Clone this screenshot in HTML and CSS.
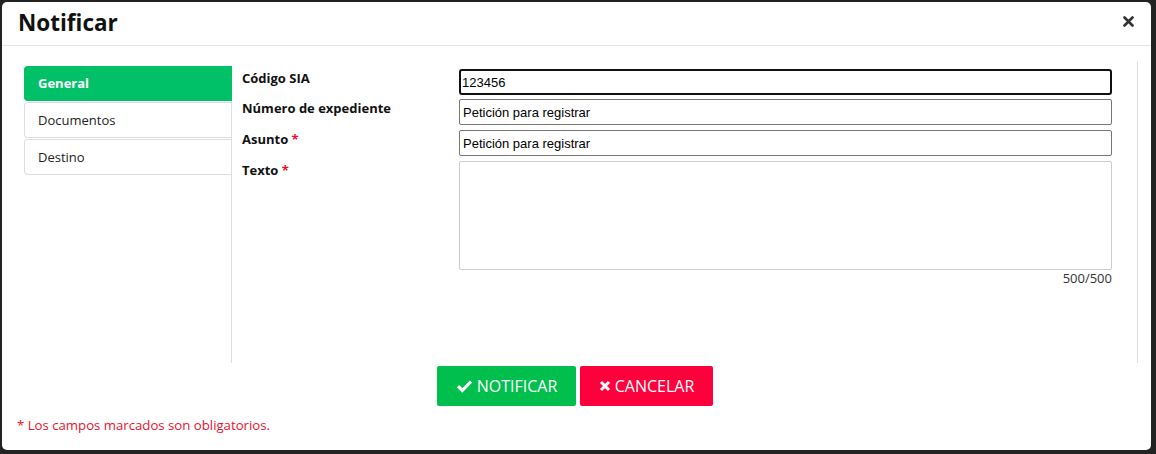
FILE: index.html
```html
<!DOCTYPE html>
<html lang="es">
<head>
    <meta charset="UTF-8">
    <meta name="viewport" content="width=device-width, initial-scale=1.0">
    <title>Notificar</title>
    <link rel="stylesheet" href="styles.css">
</head>
<body>
    <div class="modal">
        <div class="modal-header">
            <h1>Notificar</h1>
            <span class="close">
                <svg width="11" height="11" viewBox="0 0 11 11"><path d="M1.5 1.5L9.5 9.5M9.5 1.5L1.5 9.5" stroke="#333" stroke-width="2.6" stroke-linecap="round"/></svg>
            </span>
        </div>
        <div class="modal-body">
            <ul class="tabs">
                <li class="tab active">General</li>
                <li class="tab">Documentos</li>
                <li class="tab">Destino</li>
            </ul>
            <div class="pane">
                <div class="form-row">
                    <label for="sia">Código SIA</label>
                    <input type="text" id="sia" class="focused" value="123456">
                </div>
                <div class="form-row">
                    <label for="exp">Número de expediente</label>
                    <input type="text" id="exp" value="Petición para registrar">
                </div>
                <div class="form-row">
                    <label for="asunto">Asunto <span class="req">*</span></label>
                    <input type="text" id="asunto" value="Petición para registrar">
                </div>
                <div class="form-row">
                    <label for="texto">Texto <span class="req">*</span></label>
                    <div class="field">
                        <textarea id="texto"></textarea>
                        <div class="counter">500/500</div>
                    </div>
                </div>
            </div>
        </div>
        <div class="actions">
            <button type="button" class="btn btn-ok">
                <svg width="17" height="14" viewBox="0 0 17 14"><path d="M2 7.2L6.3 11.5L15 2.5" fill="none" stroke="#fff" stroke-width="3.2"/></svg>
                NOTIFICAR
            </button>
            <button type="button" class="btn btn-cancel">
                <svg width="12" height="12" viewBox="0 0 12 12"><path d="M2 2L10 10M10 2L2 10" stroke="#fff" stroke-width="3"/></svg>
                CANCELAR
            </button>
        </div>
        <div class="note">* Los campos marcados son obligatorios.</div>
    </div>
</body>
</html>
```

FILE: styles.css
```css
body {
    margin: 0;
    padding: 2px;
    background-color: #222;
    font-family: 'Open Sans', sans-serif;
    color: #222;
}
.modal {
    width: 1149px;
    height: 448px;
    background: #fff;
    border-radius: 5px;
    box-sizing: border-box;
}
.modal-header {
    height: 44px;
    border-bottom: 1px solid #e5e5e5;
    box-sizing: border-box;
    display: flex;
    align-items: center;
    justify-content: space-between;
    padding: 0 17px 0 16px;
}
.modal-header h1 {
    margin: 0;
    font-size: 22.5px;
    font-weight: 700;
    color: #111;
    line-height: 1;
}
.close {
    display: flex;
    margin-top: -4px;
}
.modal-body {
    display: flex;
    height: 317px;
    padding: 16px 13px 0 22px;
    box-sizing: border-box;
}
.tabs {
    list-style: none;
    margin: 4px 0 0 0;
    padding: 0;
    width: 208px;
    border-right: 1px solid #ddd;
    box-sizing: border-box;
}
.tab {
    height: 36px;
    margin-bottom: 1px;
    margin-right: -1px;
    padding-left: 13px;
    border: 1px solid #ddd;
    border-right: none;
    border-radius: 4px 0 0 4px;
    display: flex;
    align-items: center;
    font-size: 13px;
    color: #222;
    box-sizing: border-box;
}
.tab.active {
    height: 35px;
    margin-bottom: 1px;
    padding-bottom: 2px;
    background: #00c168;
    border-color: #00c168;
    color: #fff;
    font-weight: 700;
}
.pane {
    width: 906px;
    border-right: 1px solid #ddd;
    box-sizing: border-box;
    padding: 7px 25px 0 10px;
}
.form-row {
    display: flex;
    align-items: flex-start;
    margin-bottom: 5px;
}
.form-row:first-child {
    margin-bottom: 4px;
}
label {
    width: 217px;
    flex-shrink: 0;
    padding-top: 1px;
    font-size: 13px;
    font-weight: 700;
    line-height: 16px;
    color: #111;
}
.req {
    color: #f0102d;
}
input, textarea {
    width: 653px;
    height: 26px;
    margin: 0;
    padding: 0 3px;
    border: 1px solid #767676;
    border-radius: 2px;
    box-sizing: border-box;
    font-family: 'Liberation Sans', Arial, sans-serif;
    font-size: 13px;
    color: #000;
}
input.focused {
    border: 2px solid #111;
    border-radius: 3px;
    padding: 0 1px;
}
.field {
    width: 653px;
}
textarea {
    display: block;
    height: 109px;
    border-color: #ccc;
    resize: none;
}
.counter {
    text-align: right;
    font-size: 13px;
    line-height: 17px;
    color: #333;
}
.actions {
    display: flex;
    justify-content: center;
    gap: 4px;
    margin-top: 3px;
    padding-right: 3px;
}
.btn {
    height: 40px;
    border: none;
    border-radius: 2px;
    color: #fff;
    font-family: 'Open Sans', sans-serif;
    font-size: 16px;
    display: flex;
    align-items: center;
    justify-content: center;
    gap: 4px;
    cursor: pointer;
}
.btn-ok {
    width: 139px;
    background: #00bf4c;
}
.btn-cancel {
    width: 133px;
    background: #ff003c;
}
.note {
    margin: 10px 0 0 15px;
    font-size: 13.2px;
    color: #f0102d;
}
```
